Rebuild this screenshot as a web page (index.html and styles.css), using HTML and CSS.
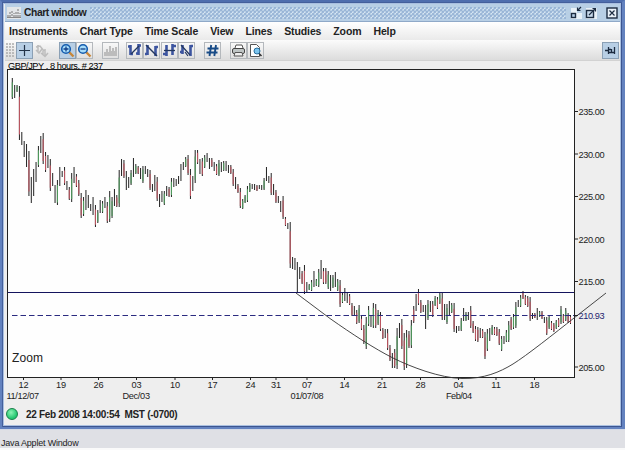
FILE: index.html
```html
<!DOCTYPE html>
<html lang="en">
<head>
  <meta charset="UTF-8" />
  <title>Chart window</title>
  <link rel="stylesheet" href="styles.css">
</head>
<body>
  <div class="window">
    <div class="titlebar">
      <svg class="app-icon" width="14" height="12" viewBox="0 0 14 12">
        <rect width="14" height="12" fill="#e3e6e8"/>
        <path d="M1 10V7M3 10V5M5 9V3M7 10V6M9 10V4M11 10V2M13 10V6" stroke="#777" stroke-dasharray="2 1"/>
        <path d="M0 10.5H14" stroke="#888"/>
      </svg>
      <span class="title">Chart window</span>
      <div class="bumps"></div>
      <div class="controls">
        <svg width="12" height="14" viewBox="0 0 12 14">
          <path d="M1 2H7V7H12V13H1Z" fill="#e9f1f8"/>
          <rect x="1.5" y="7.5" width="4" height="4" fill="#b8cfe5" stroke="#1c2b40" stroke-width="1.4"/>
          <path d="M11 1L8 4M7.5 1.5V4.5H10.5" fill="none" stroke="#1c2b40" stroke-width="1.2"/>
        </svg>
        <svg width="12" height="14" viewBox="0 0 12 14">
          <path d="M1 2H12V13H1Z" fill="#e9f1f8"/>
          <rect x="1.5" y="4.5" width="7" height="7" fill="#c8d9ea" stroke="#1c2b40" stroke-width="1.4"/>
          <path d="M4 9L10 3M7.5 2.5H10.5V5.5" fill="none" stroke="#1c2b40" stroke-width="1.2"/>
        </svg>
        <svg class="close" width="12" height="14" viewBox="0 0 12 14">
          <rect x="1" y="2" width="10" height="10" fill="#e9f1f8" stroke="#1c2b40" stroke-width="1.4"/>
          <path d="M3.5 4.5L8.5 9.5M8.5 4.5L3.5 9.5" stroke="#1c2b40" stroke-width="1.2"/>
        </svg>
      </div>
    </div>

    <div class="menubar">
      <span>Instruments</span>
      <span>Chart Type</span>
      <span>Time Scale</span>
      <span>View</span>
      <span>Lines</span>
      <span>Studies</span>
      <span>Zoom</span>
      <span>Help</span>
    </div>

    <div class="toolbar">
      <div class="grip"></div>
      <div class="group">
        <div class="tool active"><svg width="15" height="15"><path d="M7.5 2V13M2 7.5H13" stroke="#223348" stroke-width="1.2"/></svg></div>
        <div class="tool flat"><svg width="15" height="15"><path d="M2 4L6 3L10 8M4 2V9M2 7L5 10L8 6M11 6V13M7 10L11 13.5L14 10M9 8V12" fill="none" stroke="#bdbdbd" stroke-width="1.5"/></svg></div>
      </div>
      <div class="group">
        <div class="tool active"><svg width="15" height="15"><path d="M9 9L13.5 13.5" stroke="#c8873a" stroke-width="2.4"/><circle cx="6" cy="6" r="4.3" fill="#a6dcfa" stroke="#155cae" stroke-width="1.6"/><path d="M6 3.5V8.5M3.5 6H8.5" stroke="#123e87" stroke-width="1.3"/></svg></div>
        <div class="tool"><svg width="15" height="15"><path d="M9 9L13.5 13.5" stroke="#c8873a" stroke-width="2.4"/><circle cx="6" cy="6" r="4.3" fill="#a6dcfa" stroke="#155cae" stroke-width="1.6"/><path d="M3.5 6H8.5" stroke="#123e87" stroke-width="1.3"/></svg></div>
      </div>
      <div class="group tight">
        <div class="tool"><svg width="15" height="15"><path d="M1 13V9H3V6H5V9H6V3H8V8H9V5H11V8H12V4H14V13Z" fill="#bcbcbc"/></svg></div>
      </div>
      <div class="group types">
        <div class="tool"><svg width="15" height="15"><path d="M3.5 2V12M1 3.5H3M3.5 11H6M11.5 1V12M11.5 2.5H14M9 10.5H11" stroke="#3d55a0" stroke-width="2.6"/><path d="M4 11L12 3" stroke="#23375f" stroke-width="1.3"/></svg></div>
        <div class="tool"><svg width="15" height="15"><path d="M3.5 2V12M1 11H3M11.5 3V13M11.5 4H14" stroke="#3d55a0" stroke-width="2.6"/><path d="M2 2L13 13" stroke="#23375f" stroke-width="1.4"/></svg></div>
        <div class="tool"><svg width="15" height="15"><path d="M4.5 2V13M1 11H4M10.5 1V12M10.5 3H14" stroke="#3d55a0" stroke-width="2.6"/><path d="M2 7.5H13" stroke="#23375f" stroke-width="1.3"/></svg></div>
        <div class="tool"><svg width="15" height="15"><path d="M3.5 2V11M1 9H3M11.5 2V13M11.5 3H14" stroke="#3d55a0" stroke-width="2.6"/><path d="M2 2L11 12M6 9L9 13" stroke="#23375f" stroke-width="1.2"/></svg></div>
      </div>
      <div class="group">
        <div class="tool"><svg width="15" height="15"><path d="M6.2 2L4.5 13M11 2L9.3 13M2.5 5.5H13.5M1.5 9.5H12.5" stroke="#174a86" stroke-width="1.9"/></svg></div>
      </div>
      <div class="group">
        <div class="tool"><svg width="15" height="15"><path d="M4 5L5 2H11L12 5" fill="#fff" stroke="#555"/><rect x="1.5" y="5.5" width="12" height="5" rx="1.5" fill="#bfc5c5" stroke="#444"/><path d="M4 9.5H11L12 13H3Z" fill="#eee" stroke="#555"/></svg></div>
        <div class="tool"><svg width="15" height="15"><path d="M2.5 1.5H8.5L11.5 4.5V13.5H2.5Z" fill="#fff" stroke="#555"/><path d="M10.5 10L13.5 13" stroke="#333" stroke-width="1.6"/><circle cx="9" cy="8" r="3" fill="#7cc5ee" stroke="#286d9d"/></svg></div>
      </div>
      <div class="tool active pin"><svg width="15" height="15"><path d="M2 7.5H5M5.5 4V11M5.500 9.5H11M8.5 6V10M11.5 4V11M6 6.5H8" stroke="#1c2b40" stroke-width="1.3" fill="none"/></svg></div>
    </div>

    <svg id="chart" class="chart" width="614" height="341" viewBox="5 61 614 341">
      <text class="caption" x="8" y="68.5" textLength="95">GBP/JPY , 8 hours, # 237</text>
      <rect class="plot" x="7.5" y="69.5" width="567" height="308"/>
      <g id="bars"></g>
      <path class="level" d="M8 292.5H574"/>
      <path class="last" d="M12 315.5H574"/>
      <path class="cup" d="M296 293L330 318.5C352 334 375 349 393 358S440 378 462 378.500S500 372 513 364S555 333 574 318L606 293"/>
      <text class="zoom" x="12" y="362" textLength="31">Zoom</text>
      <g id="axes"></g>
    </svg>

    <div class="status">
      <span class="led"></span>
      <span class="clock">22 Feb 2008 14:00:54&nbsp; MST (-0700)</span>
    </div>
  </div>
  <div class="applet-note">Java Applet Window</div>

  <script src="chart.js"></script>
</body>
</html>
```
FILE: styles.css
```css
body {
  margin: 0;
  width: 625px;
  height: 450px;
  overflow: hidden;
  background: #fafafa;
  font-family: "Liberation Sans", Arial, sans-serif;
  color: #222;
}
.window {
  box-sizing: border-box;
  width: 625px;
  height: 429px;
  padding: 2px 2px 2px 3px;
  border: 2px solid #6382bf;
  border-top-color: #4f6eae;
  border-right-width: 3px;
  background: #eee;
  box-shadow: inset 1px 1px 0 #445f9b, inset -1px -1px 0 #3c5590, inset 2px 2px 0 #a9bfe0, inset -2px -2px 0 #a9bfe0;
  display: flex;
  flex-direction: column;
}
.titlebar {
  display: flex;
  align-items: center;
  height: 18px;
  flex: none;
  padding: 0 2px;
  background: #b8cfe5;
  border-bottom: 1px solid #8fa9c8;
  box-sizing: border-box;
}
.title {
  margin-left: 3px;
  width: 61px;
  font-size: 10.3px;
  font-weight: bold;
  letter-spacing: -0.42px;
  white-space: nowrap;
}
.bumps {
  flex: 1;
  height: 12px;
  margin: 0 4px 0 5px;
  background-image:
    radial-gradient(circle at 1px 1px, #8fadd2 0.6px, transparent 1px),
    radial-gradient(circle at 3px 3px, #8fadd2 0.6px, transparent 1px),
    radial-gradient(circle at 2px 2px, #e2edf7 0.6px, transparent 1px);
  background-size: 4px 4px;
}
.controls {
  display: flex;
  gap: 3px;
}
.controls .close {
  margin-left: 6px;
}
.menubar {
  display: flex;
  align-items: center;
  gap: 12px;
  flex: none;
  height: 18px;
  padding-left: 4px;
  background: linear-gradient(#fff, #eaeaea);
  font-size: 10.5px;
  letter-spacing: -0.12px;
  font-weight: bold;
  white-space: nowrap;
}
.toolbar {
  display: flex;
  align-items: center;
  flex: none;
  height: 21px;
  box-sizing: border-box;
  padding: 0 1px;
  border-bottom: 1px solid #d2d2d2;
  background: linear-gradient(#fbfbfb, #dcdcdc);
}
.grip {
  width: 8px;
  height: 15px;
  margin-right: 2px;
  background-image: radial-gradient(circle at 1px 1px, #aaa 0.6px, transparent 1px);
  background-size: 3px 3px;
}
.group {
  display: flex;
  margin-right: 9px;
}
.group.tight {
  margin-right: 7px;
}
.group.types {
  gap: 0.4px;
}
.tool {
  box-sizing: border-box;
  width: 17px;
  height: 17px;
  border: 1px solid #b4b8bc;
  background: linear-gradient(#f8f8f8, #e0e0e0);
}
.tool svg {
  display: block;
}
.tool.active {
  background: #b8cfe5;
  border-color: #8ba0b5;
}
.tool.flat {
  border-color: transparent;
  background: none;
}
.tool.pin {
  margin-left: auto;
}
.chart {
  display: block;
  flex: none;
}
.chart text {
  font-size: 9.2px;
  fill: #222;
}
.chart .caption {
  fill: #000;
}
.chart .zoom {
  font-size: 12px;
}
.chart .middle {
  text-anchor: middle;
}
.chart .now {
  fill: #24246e;
}
.plot {
  fill: #fefefe;
  stroke: #222;
}
.level, .last {
  stroke: #14145e;
  stroke-width: 1.2;
}
.last {
  stroke: #2b2b80;
  stroke-dasharray: 5.5 3;
}
.cup {
  fill: none;
  stroke: #333;
  stroke-width: 0.9;
}
.tick {
  stroke: #222;
}
.status {
  display: flex;
  align-items: center;
  flex: none;
  height: 23px;
  padding: 1px 0 0 1px;
  box-sizing: border-box;
}
.led {
  box-sizing: border-box;
  width: 12px;
  height: 12px;
  border: 1px solid #17804a;
  border-radius: 50%;
  background: radial-gradient(circle at 40% 35%, #8df3b4, #25c871 65%);
}
.clock {
  margin-left: 8px;
  font-size: 10px;
  font-weight: bold;
  letter-spacing: -0.3px;
}
.applet-note {
  height: 19px;
  box-sizing: border-box;
  padding: 8px 0 0 1px;
  border-top: 1px solid #d3d9e6;
  background: #dfe0e5;
  font-size: 9px;
  line-height: 11px;
  letter-spacing: -0.2px;
}
```
FILE: chart.js
```js
// high and low of each bar in pixels; body is g (up), r (down) or k (flat)
const data = `
78-99g 85-98k 85-92g 86-140r 132-145k 141-157k 144-167k 151-196r 177-203k 169-196k 162-182k 146-167g
136-153k 133-164r 152-172r 155-168k 159-191r 173-186k 185-203k 180-205g 167-186k 171-177k 167-185r 181-190k
187-200r 173-202g 167-183k 174-187r 180-196r 193-218r 197-216g 190-210k 195-208k 204-211k 197-215k 205-227r
210-223g 200-213k 201-213g 197-208k 202-223r 191-222g 197-218g 189-206k 195-207r 170-207g 159-176k 160-178r
171-190k 177-188k 170-185g 158-177k 164-174g 166-174r 168-179k 166-183g 166-174k 169-177k 170-190r 184-192k
175-191k 177-201r 194-207k 191-202k 191-205g 186-196k 187-197r 178-197g 178-187k 179-186k 176-184k 164-181k
162-170k 157-167g 155-175r 169-199r 176-191k 150-183g 150-164r 159-174k 158-176r 155-168g 153-162k 158-169k
158-167r 162-171k 164-175r 160-176g 162-172k 161-171g 161-171k 165-173k 165-174r 169-186r 177-189k 184-193r
188-208r 199-209g 195-203g 186-202g 183-192g 184-189k 184-190k 185-191r 185-189k 185-190k 178-190g 167-181k
176-183k 173-195r 184-195k 190-203r 196-203k 201-212k 196-219r 217-226r 223-229k 222-268r 257-269k 258-270k
262-293k 267-279k 271-284r 265-294r 282-292k 284-290g 280-291g 271-287k 279-286g 269-287g 260-279k 268-284r
268-284r 271-289g 275-291k 275-288g 272-287k 279-291g 280-307r 293-303g 288-301k 293-303k 294-305r 303-316r
306-315k 310-324r 305-323g 316-330r 325-344r 317-349g 306-326g 315-327k 303-328g 304-328r 310-325g 312-331r
328-339r 329-338k 329-350r 345-361r 353-368k 349-368r 328-369g 323-338k 319-349r 333-370r 330-368g 331-348r
320-348g 306-323r 294-311k 289-305r 300-313r 305-312k 305-329k 300-320g 301-312k 301-317r 296-306g 297-309r
292-304g 293-320r 304-320k 304-324g 301-315k 303-313g 303-332r 326-333k 326-331k 318-331g 308-321k 312-321g
312-320k 306-328r 321-333r 326-341r 327-342r 328-338k 329-338r 332-359r 329-351g 328-341k 325-335g 327-335r
327-336r 329-345r 336-351g 336-344k 330-342g 321-342g 317-330r 314-329g 302-328g 300-307k 295-307g 291-299r
295-305r 296-307r 297-321r 313-319k 313-318r 308-320k 311-317g 311-319r 317-323k 317-335r 315-329g 321-330r
323-332r 320-329g 318-327r 306-324g 314-323r 308-321g 313-323r 315-324r
`.trim().split(/\s+/);

const colors = { g: '#4f9a5d', r: '#bb5560', k: '#333' };
const firstX = 12.3;
const step = (570.5 - firstX) / (data.length - 1);

let out = '';
data.forEach((d, i) => {
  const high = parseInt(d);
  const low = parseInt(d.split('-')[1]);
  const x = (firstX + i * step).toFixed(2);
  const color = colors[d.slice(-1)];
  const cut = (low - high) * 0.2;
  out += `<path d="M${x} ${high}V${low}" stroke="#222" stroke-width="1"/>`;
  if (color !== '#333') {
    out += `<path d="M${x} ${high + cut}V${low - cut / 2}" stroke="${color}" stroke-width="1.1"/>`;
  }
});
document.getElementById('bars').innerHTML = out;

const prices = [[111.5, '235.00'], [154, '230.00'], [196.5, '225.00'], [239, '220.00'], [281.5, '215.00'], [367, '205.00']];
const days = [[23.5, '12'], [61, '19'], [98.5, '26'], [136.5, '03'], [175, '10'], [212.5, '17'], [250.5, '24'], [276, '31'],
  [307, '07'], [344.5, '14'], [382, '21'], [420.5, '28'], [458.5, '04'], [496, '11'], [534.5, '18']];
const dates = [[6.5, 32.5, '11/12/07'], [122.5, 27.5, 'Dec/03'], [290.5, 33, '01/07/08'], [446, 26, 'Feb/04']];

let axes = '';
prices.forEach(([y, label]) => {
  axes += `<path class="tick" d="M575 ${y}H578"/><text x="578.5" y="${y + 3.5}" textLength="26">${label}</text>`;
});
axes += '<path class="tick" d="M575 315.5H578"/><text class="now" x="578.5" y="319" textLength="26">210.93</text>';
days.forEach(([x, label]) => {
  axes += `<path class="tick" d="M${x} 378V380"/><text class="middle" x="${x}" y="388">${label}</text>`;
});
dates.forEach(([x, width, label]) => {
  axes += `<text x="${x}" y="399" textLength="${width}">${label}</text>`;
});
document.getElementById('axes').innerHTML = axes;
```
